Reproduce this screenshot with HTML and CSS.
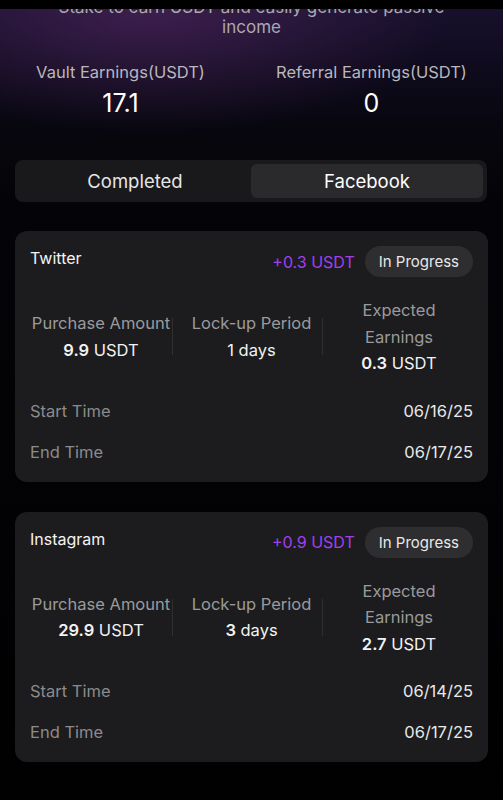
FILE: index.html
```html
<!DOCTYPE html>
<html lang="en">
<head>
    <meta charset="UTF-8">
    <meta name="viewport" content="width=device-width, initial-scale=1.0">
    <title>Staking</title>
    <link rel="stylesheet" href="styles.css">
</head>
<body>
    <div class="status-bar"></div>

    <div class="top">
        <div class="hero">
            <p class="hero-text">Stake to earn USDT and easily generate passive income</p>
            <div class="totals">
                <div class="total">
                    <div class="total-label">Vault Earnings(USDT)</div>
                    <div class="total-value">17.1</div>
                </div>
                <div class="total">
                    <div class="total-label">Referral Earnings(USDT)</div>
                    <div class="total-value">0</div>
                </div>
            </div>
        </div>

        <div class="tabs">
            <div class="tab">Completed</div>
            <div class="tab active">Facebook</div>
        </div>
    </div>

    <div class="list">
        <div class="card">
            <div class="card-head">
                <div class="card-title">Twitter</div>
                <div class="card-gain">+0.3 USDT</div>
                <div class="badge">In Progress</div>
            </div>
            <div class="stats">
                <div class="stat">
                    <div class="stat-label">Purchase Amount</div>
                    <div class="stat-value"><b>9.9</b> USDT</div>
                </div>
                <div class="divider"></div>
                <div class="stat">
                    <div class="stat-label">Lock-up Period</div>
                    <div class="stat-value">1 days</div>
                </div>
                <div class="divider"></div>
                <div class="stat">
                    <div class="stat-label wrap">Expected Earnings</div>
                    <div class="stat-value"><b>0.3</b> USDT</div>
                </div>
            </div>
            <div class="row"><span class="row-label">Start Time</span><span class="row-value">06/16/25</span></div>
            <div class="row"><span class="row-label">End Time</span><span class="row-value">06/17/25</span></div>
        </div>

        <div class="card">
            <div class="card-head">
                <div class="card-title">Instagram</div>
                <div class="card-gain">+0.9 USDT</div>
                <div class="badge">In Progress</div>
            </div>
            <div class="stats">
                <div class="stat">
                    <div class="stat-label">Purchase Amount</div>
                    <div class="stat-value"><b>29.9</b> USDT</div>
                </div>
                <div class="divider"></div>
                <div class="stat">
                    <div class="stat-label">Lock-up Period</div>
                    <div class="stat-value"><b>3</b> days</div>
                </div>
                <div class="divider"></div>
                <div class="stat">
                    <div class="stat-label wrap">Expected Earnings</div>
                    <div class="stat-value"><b>2.7</b> USDT</div>
                </div>
            </div>
            <div class="row"><span class="row-label">Start Time</span><span class="row-value">06/14/25</span></div>
            <div class="row"><span class="row-label">End Time</span><span class="row-value">06/17/25</span></div>
        </div>
    </div>
</body>
</html>
```

FILE: styles.css
```css
body {
    margin: 0;
    font-family: Inter, "Noto Sans", sans-serif;
    color: #fff;
    background: #000;
    overflow: hidden;
}
.status-bar {
    position: absolute; /* overlay on top of the hero */
    top: 0;
    left: 0;
    right: 0;
    height: 9px;
    background: #000;
}
.top {
    background:
        radial-gradient(ellipse 300px 120px at 150px 15px, rgba(80, 38, 95, 0.65), rgba(60, 25, 80, 0) 100%),
        linear-gradient(180deg, #191130 0%, #0d0a1a 40%, #06060c 70%, #040408 100%);
}
.hero {
    padding-bottom: 42px;
}
.hero-text {
    margin: -3px auto 0;
    width: 390px;
    text-align: center;
    font-size: 17px;
    line-height: 20px;
    color: #aaa8b0;
}
.totals {
    display: flex;
    margin: 23px 6px 0 -5px;
}
.total {
    flex: 1;
    text-align: center;
}
.total-label {
    font-size: 16.5px;
    line-height: 24px;
    color: #b9b7bd;
}
.total-value {
    margin-top: 4px;
    font-size: 25px;
    line-height: 30px;
    color: #fff;
}
.tabs {
    display: flex;
    margin: 0 16px 0 15px;
    padding: 4px;
    background: #19191b;
    border-radius: 8px;
}
.tab {
    flex: 1;
    height: 34px;
    line-height: 34px;
    text-align: center;
    font-size: 18.5px;
    color: #e6e6e6;
    border-radius: 6px;
}
.tab.active {
    background: #2a2a2c;
    color: #fff;
}
.list {
    padding: 29px 15px 40px;
    background: linear-gradient(180deg, #040408 0%, #020204 60%, #000 100%);
}
.card {
    background: #1c1c1e;
    border-radius: 12px;
    padding: 15px 15px 9px;
    margin-bottom: 30px;
}
.card-head {
    display: flex;
    align-items: flex-start;
}
.card-title {
    flex: 1;
    font-size: 16px;
    line-height: 24px;
    color: #f4f4f4;
}
.card-gain {
    align-self: center;
    margin-right: 10px;
    font-size: 16px;
    color: #a43ff0;
}
.badge {
    height: 31px;
    line-height: 31px;
    padding: 0 14px;
    border-radius: 16px;
    background: #2e2e30;
    font-size: 15px;
    color: #e8e8e8;
}
.stats {
    display: grid;
    grid-template-columns: 142px 1px 149px 1px 1fr;
    align-items: center;
    margin-top: 20px;
}
.divider {
    height: 37px;
    background: #2f2f31;
}
.stat {
    text-align: center;
    font-size: 16.5px;
    line-height: 26.5px;
}
.stat:nth-child(3) {
    padding-left: 8px;
}
.stat:nth-child(5) {
    padding-left: 10px;
    padding-right: 8px;
}
.stat-label {
    color: #9a9a9c;
    white-space: nowrap;
}
.stat-label.wrap {
    white-space: normal;
    width: 90px;
    margin: 0 auto;
}
.stat-value {
    color: #f2f2f2;
}
.stat-value b {
    font-weight: 600;
}
.row {
    display: flex;
    justify-content: space-between;
    height: 41px;
    line-height: 41px;
    font-size: 16.5px;
}
.stats + .row {
    margin-top: 14px;
}
.row-label {
    color: #8b8b8d;
}
.row-value {
    color: #e9e9e9;
}
```
